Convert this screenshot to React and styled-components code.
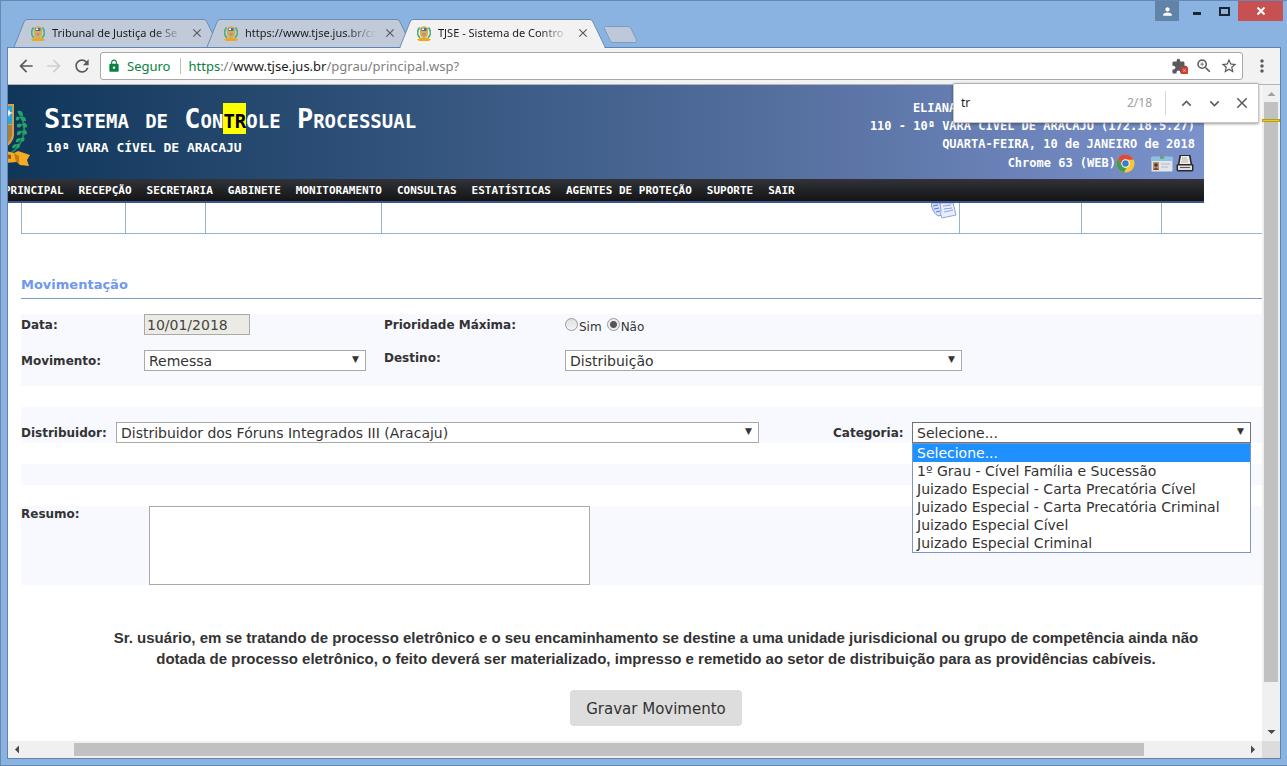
import React, { useState } from 'react';
import styled, { createGlobalStyle, css } from 'styled-components';
import {
  MdArrowBack,
  MdArrowForward,
  MdClose,
  MdExpandLess,
  MdExpandMore,
  MdExtension,
  MdLock,
  MdMoreVert,
  MdPerson,
  MdRefresh,
  MdStarBorder,
  MdZoomIn,
} from 'react-icons/md';

const uiFont = '"Noto Sans", "Open Sans", sans-serif';
const formFont = '"DejaVu Sans", Verdana, sans-serif';
const monoFont = '"DejaVu Sans Mono", "Liberation Mono", monospace';

const GlobalStyle = createGlobalStyle`
  *, *::before, *::after {
    box-sizing: border-box;
  }

  body {
    margin: 0;
    color: #333333;
    font-family: ${formFont};
  }

  button, input, select, textarea {
    font: inherit;
    color: inherit;
    margin: 0;
  }
`;

/* ---------- browser window ---------- */

const Window = styled.div`
  min-height: 100vh;
  display: flex;
  flex-direction: column;
  padding: 0 6px 6px;
  background: #8ab3e2;
  border: 1px solid #6688b4;
  border-right-width: 0;
`;

const TitleBar = styled.header`
  display: flex;
  justify-content: space-between;
  height: 46px;
`;

const Tabs = styled.div`
  display: flex;
  align-items: flex-end;
  padding-left: 7px;
`;

const TabShape = styled.svg`
  position: absolute;
  inset: 0;
  width: 100%;
  height: 100%;
  overflow: visible;
`;

const TabBox = styled.div`
  position: relative;
  z-index: ${({ $active }) => ($active ? 2 : 1)};
  display: flex;
  align-items: center;
  gap: 7px;
  width: 205px;
  height: 28px;
  padding: 0 15px 0 17px;
  margin-right: -12px;
`;

const TabIcon = styled.svg`
  position: relative;
  flex: none;
`;

const TabTitle = styled.span`
  position: relative;
  flex: 1;
  white-space: nowrap;
  font: 11px/20px ${uiFont};
  color: #1c1c1c;
  mask-image: linear-gradient(to right, #000 78%, transparent);
`;

const IconButton = styled.button`
  position: relative;
  display: flex;
  align-items: center;
  justify-content: center;
  flex: none;
  width: ${({ $size }) => $size || 20}px;
  height: ${({ $size }) => $size || 20}px;
  padding: 0;
  border: 0;
  background: none;
  color: ${({ $color }) => $color || '#5a5a5a'};
`;

const NewTab = styled.button`
  align-self: flex-end;
  width: 36px;
  height: 18px;
  margin: 0 0 3px 10px;
  padding: 0;
  border: 0;
  background: none;

  svg {
    display: block;
  }
`;

const WindowButtons = styled.div`
  display: flex;
  align-items: flex-start;
  margin-right: -2px;
`;

const WindowButton = styled.button`
  display: flex;
  align-items: center;
  justify-content: center;
  width: ${({ $width }) => $width}px;
  height: 20px;
  padding: 0;
  border: 0;
  background: ${({ $bg }) => $bg || 'none'};
  color: #ffffff;
`;

const UserButton = styled(WindowButton)`
  margin-right: 4px;
`;

const Frame = styled.div`
  position: relative;
  flex: 1;
  display: flex;
  flex-direction: column;
  border: 1px solid #5d84b4;
  background: #ffffff;
`;

const Toolbar = styled.div`
  display: flex;
  align-items: center;
  height: 37px;
  padding: 0 8px;
  background: #f2f2f2;
  border-bottom: 1px solid #b4b4b4;
`;

const NavButtons = styled.div`
  display: flex;
  gap: 8px;
  margin-right: 8px;
`;

const AddressBar = styled.div`
  flex: 1;
  display: flex;
  align-items: center;
  height: 28px;
  margin-right: 9px;
  padding: 0 3px 0 6px;
  border: 1px solid #a8a8a8;
  border-radius: 3px;
  background: #ffffff;
  font: 13px/20px ${uiFont};
`;

const Secure = styled.span`
  display: flex;
  align-items: center;
  gap: 6px;
  height: 16px;
  padding-right: 10px;
  margin-right: 7px;
  border-right: 1px solid #c0c0c0;
  color: #0b8043;
`;

const Url = styled.div`
  flex: 1;
  color: #808080;
  outline: none;

  em {
    font-style: normal;
    color: #0b8043;
  }

  strong {
    font-weight: normal;
    color: #1c1c1c;
  }
`;

const AddressIcons = styled.div`
  display: flex;
  gap: 5px;
`;

const BlockedBadge = styled.span`
  position: absolute;
  right: 1px;
  bottom: 2px;
  display: flex;
  padding: 1px;
  border-radius: 1px;
  background: #d23f31;
  color: #ffffff;
`;

const FindBar = styled.form`
  position: absolute;
  z-index: 5;
  top: 35px;
  right: 21px;
  display: flex;
  align-items: center;
  width: 306px;
  height: 40px;
  padding: 0 6px 0 7px;
  border: 1px solid #c6c6c6;
  border-top-color: #b0b0b0;
  border-radius: 2px;
  background: #ffffff;
  box-shadow: 0 1px 3px rgba(0, 0, 0, 0.4);
  font: 12px/20px ${uiFont};
`;

const FindInput = styled.input`
  flex: 1;
  min-width: 0;
  padding: 0;
  border: 0;
  outline: none;
  color: #1c1c1c;
`;

const FindCount = styled.span`
  height: 24px;
  line-height: 24px;
  padding-right: 13px;
  margin-right: 10px;
  border-right: 1px solid #d5d5d5;
  color: #a0a0a0;
`;

const FindButtons = styled.div`
  display: flex;
  gap: 8px;
`;

/* ---------- scroll bars ---------- */

const Viewport = styled.div`
  flex: 1;
  display: grid;
  grid-template-columns: minmax(0, 1fr) 18px;
  grid-template-rows: minmax(0, 1fr) 17px;
`;

const Track = styled.div`
  display: flex;
  align-items: center;
  flex-direction: ${({ $vertical }) => ($vertical ? 'column' : 'row')};
  background: #f0f0f0;
`;

const Thumb = styled.div`
  flex: ${({ $share }) => $share} 0 0;
  ${({ $vertical }) => ($vertical ? css`width: 14px;` : css`height: 13px;`)}
  background: #c1c1c1;
`;

const Rest = styled.div`
  flex: ${({ $share }) => $share} 0 0;
`;

const FindMark = styled.div`
  width: 18px;
  height: 3px;
  margin-top: 17px;
  margin-left: -2px;
  border: 1px solid #b89c1c;
  background: #f0d000;
`;

const Arrow = styled.svg`
  flex: none;
  width: 17px;
  height: 17px;
  fill: ${({ $dim }) => ($dim ? '#a0a0a0' : '#4a4a4a')};
`;

const Corner = styled.div`
  background: #dcdcdc;
`;

/* ---------- page ---------- */

const Page = styled.div`
  overflow: hidden;
`;

const Banner = styled.header`
  margin-right: 58px;
`;

const BannerTop = styled.div`
  display: flex;
  justify-content: space-between;
  height: 94px;
  padding-right: 9px;
  background: linear-gradient(to right, #10365a, #34557e 35%, #5b74a5 70%, #7b92cc);
  color: #ffffff;
  font-family: ${monoFont};
  font-weight: bold;
`;

const Brand = styled.div`
  display: flex;
  gap: 13px;
  padding-top: 19px;
`;

const Title = styled.h1`
  margin: 0;
  font-size: 27px;
  line-height: 30px;
  font-variant: small-caps;
  white-space: nowrap;

  mark {
    background: #ffff00;
    color: #000000;
  }
`;

const Court = styled.p`
  margin: 4px 0 0 2px;
  font-size: 13px;
  line-height: 20px;
`;

const Session = styled.div`
  padding-top: 14px;
  font-size: 12px;
  line-height: 18px;
  text-align: right;
  white-space: nowrap;
`;

const UserName = styled.div`
  padding-left: 43px;
  text-align: left;
`;

const Client = styled.div`
  display: flex;
  align-items: center;
  justify-content: flex-end;
  height: 20px;
`;

const ClientIcons = styled.span`
  display: flex;
  align-items: center;
  gap: 3px;
  margin: 0 1px 0 16px;
`;

const Menu = styled.nav`
  display: flex;
  gap: 15px;
  height: 24px;
  margin-left: -4px;
  background: linear-gradient(#313339, #141414);
  border-bottom: 2px solid #3c568f;
`;

const MenuLink = styled.a`
  color: #ffffff;
  font: bold 11px/24px ${monoFont};
  text-decoration: none;
  white-space: nowrap;
`;

// the sheet is wider than the viewport, its right edge is scrolled out
const Sheet = styled.main`
  width: calc(100% + 29px);
  padding: 0 0 15px 13px;
`;

const HistoryTable = styled.table`
  width: 100%;
  table-layout: fixed;
  border-collapse: collapse;

  td {
    height: 30px;
    padding: 0 2px 13px;
    border: 1px solid #93b3cf;
    border-top: 0;
    text-align: right;
    vertical-align: top;
  }

  svg {
    display: block;
    margin-left: auto;
  }
`;

const SectionTitle = styled.h2`
  margin: 41px 0 15px;
  padding-bottom: 3px;
  border-bottom: 1px solid #7c9cc2;
  color: #6f98ec;
  font: bold 13px/20px ${formFont};
`;

const Band = styled.div`
  margin-bottom: 21px;
  background: #f8f9ff;
`;

const EmptyBand = styled(Band)`
  height: 21px;
`;

const MainFields = styled(Band)`
  display: grid;
  grid-template-columns: 123px 240px 181px minmax(0, 1fr);
  grid-auto-rows: 21px;
  row-gap: 15px;
  padding-bottom: 15px;
`;

const DistributionFields = styled(Band)`
  display: grid;
  grid-template-columns: 95px minmax(0, 643fr) 74px 79px minmax(0, 339fr);
  grid-auto-rows: 21px;
  padding: 15px 40px 0 0;
`;

const SummaryFields = styled(Band)`
  display: grid;
  grid-template-columns: 128px minmax(0, 1fr);
`;

const Label = styled.label`
  grid-column-start: ${({ $column }) => $column || 'auto'};
  font: bold 12px/22px ${formFont};
  line-height: ${({ $compact }) => ($compact ? 16 : 22)}px;
  color: #333333;
`;

const DateInput = styled.input`
  width: 106px;
  height: 21px;
  padding: 1px 2px 0;
  border: 1px solid #a9a9a9;
  background: #ebebe4;
  color: #444444;
  font-size: 14px;
`;

const RadioGroup = styled.div`
  display: flex;
  align-items: center;
  gap: 5px;
  font-size: 12px;
`;

const RadioLabel = styled.label`
  display: flex;
  align-items: flex-end;
  gap: 1px;
  line-height: 14px;
  padding-top: 6px;
`;

const Radio = styled.input.attrs({ type: 'radio' })`
  appearance: none;
  align-self: flex-start;
  width: 13px;
  height: 13px;
  margin-top: -2px;
  border: 1px solid #9a9a9a;
  border-radius: 50%;
  background: linear-gradient(#e0e0e0, #f4f4f4);

  &:checked {
    background: radial-gradient(circle, #555555 0 3px, #ececec 4px);
  }
`;

const SelectBox = styled.div`
  position: relative;
  width: ${({ $width }) => $width || '100%'};
  max-width: 100%;
  height: 21px;

  &::after {
    content: '▼';
    position: absolute;
    top: 0;
    right: 7px;
    font: 9px/18px ${formFont};
    pointer-events: none;
  }
`;

const Select = styled.select`
  appearance: none;
  display: block;
  width: 100%;
  height: 21px;
  padding: 1px 20px 0 4px;
  border: 1px solid ${({ $open }) => ($open ? '#6e7480' : '#a9a9a9')};
  border-radius: 0;
  background: #ffffff;
  font-size: 14px;
  line-height: 19px;
`;

const OptionList = styled.ul`
  position: absolute;
  z-index: 3;
  top: 21px;
  left: 0;
  right: 0;
  margin: 0;
  padding: 0;
  list-style: none;
  border: 1px solid #7b96c6;
  background: #ffffff;
`;

const Option = styled.li`
  padding: 0 4px;
  font-size: 14px;
  line-height: 18px;
  white-space: nowrap;
  background: ${({ $selected }) => ($selected ? '#1e90ff' : 'transparent')};
  color: ${({ $selected }) => ($selected ? '#ffffff' : '#333333')};
`;

const Summary = styled.textarea`
  display: block;
  width: 441px;
  max-width: 100%;
  height: 79px;
  border: 1px solid #a9a9a9;
  background: #ffffff;
  resize: none;
`;

const Notice = styled.p`
  margin: 42px 72px 0;
  text-align: center;
  font: bold 15px/21px "Liberation Sans", Arial, sans-serif;
`;

const SaveButton = styled.button`
  display: block;
  margin: 21px auto 0;
  padding: 9px 16px 7px;
  border: 0;
  border-radius: 4px;
  background: #dddddd;
  font-size: 15px;
  line-height: 20px;
`;

const Favicon = () => (
  <TabIcon width="14" height="16" viewBox="0 0 14 16" aria-hidden="true">
    <path d="M2.5 2.5C0 6 0 10 3 13M11.5 2.5C14 6 14 10 11 13" fill="none" stroke="#4fae7c" strokeWidth="1.6" />
    <path d="M3 3q4-3.500 8 0v6q0 3-4 4.500Q3 12 3 9z" fill="#d8ae4c" />
    <path d="M4.500 3h5v3h-5z" fill="#4b6ea8" />
    <path d="M5 3.500h2v1.500H5z" fill="#fff" />
    <path d="M5 8h4l-1 3H6z" fill="#b98fa0" />
    <path d="M0 14.500l3-1.500h8l3 1.500-2 1.500H2z" fill="#eba81f" />
  </TabIcon>
);

const Crest = () => (
  <svg width="23" height="64" viewBox="0 0 23 64" aria-hidden="true">
    <path d="M-8 0H6V32Q4 42-8 46z" fill="#d2a14a" />
    <path d="M-8 2H4V20H-8z" fill="#27a5d8" />
    <path d="M-8 21H4V31Q2 40-8 43z" fill="#b07b35" />
    <path d="M1 5l1 3 3 1-3 1-1 3-1-3-3-1 3-1z" fill="#fff" />
    <path d="M10 7Q19 20 15 33 11 44 3 49" fill="none" stroke="#1f8a5f" strokeWidth="2" />
    <g fill="#25a36c">
      <path d="M10 7q5-1 5 5-5 0-5-5zM12 13q6-2 6 4-5 1-6-4zM14 20q5-3 5 3-4 2-5-3zM14 27q5-3 5 3-5 2-5-3zM13 34q5-2 3 3-4 2-3-3zM9 40q5-1 2 4-4 1-2-4z" />
      <path d="M12 13q-5-2-4 3 3 2 4-3zM14 20q-6-2-5 3 4 2 5-3zM14 27q-6-1-5 4 4 1 5-4zM13 34q-6 0-5 4 4 1 5-4zM9 40q-5 0-5 4 4 1 5-4z" />
    </g>
    <path d="M-2 47l8 2 4-2 12 4-3 5 2 6-9-1-3-3-11 1z" fill="#f4ac22" />
    <path d="M6 49l5 3v7l-3-1z" fill="#c27a15" />
    <path d="M-2 50l5 1v4l-5-1z" fill="#8c5b16" />
  </svg>
);

const ChromeLogo = () => (
  <svg width="19" height="19" viewBox="0 0 20 20" aria-hidden="true">
    <circle cx="10" cy="10" r="9.500" fill="#f5c73a" />
    <path d="M1.800 5.200A9.500 9.500 0 0 1 18.500 6H10a4 4 0 0 0-3.600 5.500z" fill="#de4b3c" />
    <path d="M1.800 5.200l4.600 7A4 4 0 0 0 11 14l-2.500 5.400A9.500 9.500 0 0 1 1.800 5.200z" fill="#3f9d55" />
    <circle cx="10" cy="10" r="4.400" fill="#fff" />
    <circle cx="10" cy="10" r="3.400" fill="#3380c8" />
  </svg>
);

const IdCard = () => (
  <svg width="22" height="18" viewBox="0 0 22 18" aria-hidden="true">
    <rect x="0.500" y="3" width="21" height="14.500" rx="1" fill="#dfe5ea" stroke="#aabccc" />
    <rect x="0.500" y="3" width="21" height="4" fill="#8cc0e4" />
    <rect x="2" y="8" width="6" height="8" fill="#b9936f" />
    <circle cx="5" cy="11" r="1.800" fill="#4e3328" />
    <path d="M2 16q3-5 6 0z" fill="#963b35" />
    <path d="M10 10h9M10 13h7" stroke="#b3b9be" />
    <rect x="9" y="0" width="4" height="5" rx="1" fill="#6c9a90" />
  </svg>
);

const Printer = () => (
  <svg width="18" height="18" viewBox="0 0 18 18" aria-hidden="true">
    <path d="M3.500 1h11l1.500 8.500 1.500 1.500v5l-1 1.500h-15L0.500 16v-5L2 9.500z" fill="#2a2a2e" />
    <path d="M5 2h8l1.500 8h-11z" fill="#f3f0ea" />
    <path d="M6 4h5M6 6h6M5 8h7" stroke="#b5b0a6" />
    <path d="M2 11.500h14v4.500H2z" fill="#dedede" />
    <path d="M4 13.500h10" stroke="#555" />
  </svg>
);

const Papers = () => (
  <svg width="26" height="16" viewBox="0 0 26 16" aria-hidden="true">
    <path d="M0 0h9l3 12-5 1Q1 9 0 0z" fill="#d5defa" stroke="#8499d8" />
    <path d="M2 3l5-1M3 6l5-1M5 9l4-1" stroke="#5f7bd2" />
    <path d="M9 0h13l3 12-14 3Q9 12 10 7z" fill="#e9eefe" stroke="#8ea2dc" />
    <path d="M12 3l8-1M13 6l8-1M13 9l9-2" stroke="#8aa0e0" />
  </svg>
);

const TAB_SHAPE = 'M0 28L10 3Q11 0.500 13 0.500H190Q192 0.500 193 3L205 28';

const Tab = ({ active, children }) => (
  <TabBox $active={active}>
    <TabShape viewBox="0 0 205 28" preserveAspectRatio="none" aria-hidden="true">
      <path d={TAB_SHAPE} fill={active ? '#f2f2f2' : '#c0cad9'} stroke="#6d8cb4" />
      {active && <path d="M0.500 28.500H204.500" stroke="#f2f2f2" />}
    </TabShape>
    <Favicon />
    <TabTitle>{children}</TabTitle>
    <IconButton $size={14} aria-label="Fechar guia"><MdClose size={14} /></IconButton>
  </TabBox>
);

const menuItems = [
  'PRINCIPAL',
  'RECEPÇÃO',
  'SECRETARIA',
  'GABINETE',
  'MONITORAMENTO',
  'CONSULTAS',
  'ESTATÍSTICAS',
  'AGENTES DE PROTEÇÃO',
  'SUPORTE',
  'SAIR',
];

const categories = [
  'Selecione...',
  '1º Grau - Cível Família e Sucessão',
  'Juizado Especial - Carta Precatória Cível',
  'Juizado Especial - Carta Precatória Criminal',
  'Juizado Especial Cível',
  'Juizado Especial Criminal',
];

const BrowserTop = () => (
  <TitleBar>
    <Tabs>
      <Tab>Tribunal de Justiça de Se</Tab>
      <Tab>https://www.tjse.jus.br/cc</Tab>
      <Tab active>TJSE - Sistema de Contro</Tab>
      <NewTab aria-label="Nova guia">
        <svg width="36" height="18" viewBox="0 0 36 18">
          <path d="M2.500 0.500H25Q27 0.500 28 2.500L33.500 14Q34 16.500 32 16.500H10Q8 16.500 7 14.500L1.500 2.500Q1 0.500 2.500 0.500z" fill="#bdc8d8" stroke="#7f9bbf" />
        </svg>
      </NewTab>
    </Tabs>
    <WindowButtons>
      <UserButton $width={24} $bg="#6283a8" aria-label="Usuário"><MdPerson size={13} /></UserButton>
      <WindowButton $width={28} aria-label="Minimizar">
        <svg width="10" height="10"><path d="M1 7.500h8" stroke="#1c2630" strokeWidth="3" /></svg>
      </WindowButton>
      <WindowButton $width={27} aria-label="Maximizar">
        <svg width="11" height="9"><rect x="1" y="1" width="9" height="7" fill="none" stroke="#1c2630" strokeWidth="2" /></svg>
      </WindowButton>
      <WindowButton $width={45} $bg="#c75050" aria-label="Fechar">
        <svg width="8" height="8"><path d="M0.500 0.500l7 7M7.500 0.500l-7 7" stroke="#fff" strokeWidth="2" /></svg>
      </WindowButton>
    </WindowButtons>
  </TitleBar>
);

const BrowserToolbar = () => (
  <Toolbar>
    <NavButtons>
      <IconButton aria-label="Voltar"><MdArrowBack size={20} /></IconButton>
      <IconButton $color="#cfcfcf" aria-label="Avançar"><MdArrowForward size={20} /></IconButton>
      <IconButton aria-label="Recarregar"><MdRefresh size={20} /></IconButton>
    </NavButtons>
    <AddressBar>
      <Secure><MdLock size={14} />Seguro</Secure>
      <Url role="textbox" aria-label="Endereço" contentEditable suppressContentEditableWarning spellCheck={false}>
        <em>https</em>://<strong>www.tjse.jus.br</strong>/pgrau/principal.wsp?
      </Url>
      <AddressIcons>
        <IconButton aria-label="Plug-in bloqueado">
          <MdExtension size={17} />
          <BlockedBadge><MdClose size={5} /></BlockedBadge>
        </IconButton>
        <IconButton aria-label="Zoom"><MdZoomIn size={18} /></IconButton>
        <IconButton aria-label="Favoritar"><MdStarBorder size={18} /></IconButton>
      </AddressIcons>
    </AddressBar>
    <IconButton aria-label="Menu"><MdMoreVert size={20} /></IconButton>
  </Toolbar>
);

const FindInPage = () => {
  const [term, setTerm] = useState('tr');

  return (
    <FindBar onSubmit={(e) => e.preventDefault()}>
      <FindInput aria-label="Localizar" value={term} onChange={(e) => setTerm(e.target.value)} />
      <FindCount>2/18</FindCount>
      <FindButtons>
        <IconButton type="button" aria-label="Anterior"><MdExpandLess size={19} /></IconButton>
        <IconButton type="button" aria-label="Próximo"><MdExpandMore size={19} /></IconButton>
        <IconButton type="button" aria-label="Fechar busca"><MdClose size={18} /></IconButton>
      </FindButtons>
    </FindBar>
  );
};

const PageBanner = () => (
  <Banner>
    <BannerTop>
      <Brand>
        <Crest />
        <div>
          <Title>Sistema de Con<mark>tr</mark>ole Processual</Title>
          <Court>10ª VARA CÍVEL DE ARACAJU</Court>
        </div>
      </Brand>
      <Session>
        <UserName>ELIANA</UserName>
        <div>110 - 10ª VARA CÍVEL DE ARACAJU (172.18.5.27)</div>
        <div>QUARTA-FEIRA, 10 de JANEIRO de 2018</div>
        <Client>
          Chrome 63 (WEB)
          <ChromeLogo />
          <ClientIcons>
            <IdCard />
            <Printer />
          </ClientIcons>
        </Client>
      </Session>
    </BannerTop>
    <Menu>
      {menuItems.map((item) => (
        <MenuLink href="#" key={item}>{item}</MenuLink>
      ))}
    </Menu>
  </Banner>
);

const MovementForm = () => {
  const [priority, setPriority] = useState('nao');
  const [category, setCategory] = useState(categories[0]);

  return (
    <form onSubmit={(e) => e.preventDefault()}>
      <SectionTitle>Movimentação</SectionTitle>

      <MainFields>
        <Label htmlFor="data">Data:</Label>
        <DateInput id="data" value="10/01/2018" readOnly />
        <Label as="span" id="prioridade">Prioridade Máxima:</Label>
        <RadioGroup role="radiogroup" aria-labelledby="prioridade">
          <RadioLabel>
            <Radio name="prioridade" checked={priority === 'sim'} onChange={() => setPriority('sim')} />
            Sim
          </RadioLabel>
          <RadioLabel>
            <Radio name="prioridade" checked={priority === 'nao'} onChange={() => setPriority('nao')} />
            Não
          </RadioLabel>
        </RadioGroup>

        <Label htmlFor="movimento">Movimento:</Label>
        <SelectBox $width="222px">
          <Select id="movimento"><option>Remessa</option></Select>
        </SelectBox>
        <Label htmlFor="destino" $compact>Destino:</Label>
        <SelectBox $width="397px">
          <Select id="destino"><option>Distribuição</option></Select>
        </SelectBox>
      </MainFields>

      <DistributionFields>
        <Label htmlFor="distribuidor">Distribuidor:</Label>
        <SelectBox>
          <Select id="distribuidor"><option>Distribuidor dos Fóruns Integrados III (Aracaju)</option></Select>
        </SelectBox>
        <Label htmlFor="categoria" $column={4}>Categoria:</Label>
        <SelectBox>
          <Select id="categoria" $open value={category} onChange={(e) => setCategory(e.target.value)}>
            {categories.map((name) => <option key={name}>{name}</option>)}
          </Select>
          <OptionList role="listbox" aria-label="Categoria">
            {categories.map((name) => (
              <Option
                key={name}
                role="option"
                aria-selected={name === category}
                $selected={name === category}
                onClick={() => setCategory(name)}
              >
                {name}
              </Option>
            ))}
          </OptionList>
        </SelectBox>
      </DistributionFields>

      <EmptyBand />

      <SummaryFields>
        <Label htmlFor="resumo" $compact>Resumo:</Label>
        <Summary id="resumo" />
      </SummaryFields>

      <Notice>
        Sr. usuário, em se tratando de processo eletrônico e o seu encaminhamento se destine a uma
        unidade jurisdicional ou grupo de competência ainda não dotada de processo eletrônico, o
        feito deverá ser materializado, impresso e remetido ao setor de distribuição para as
        providências cabíveis.
      </Notice>
      <SaveButton type="submit">Gravar Movimento</SaveButton>
    </form>
  );
};

const App = () => (
  <Window>
    <GlobalStyle />
    <BrowserTop />
    <Frame>
      <BrowserToolbar />
      <FindInPage />
      <Viewport>
        <Page>
          <PageBanner />
          <Sheet>
            <HistoryTable>
              <colgroup>
                <col width="104" />
                <col width="80" />
                <col width="176" />
                <col />
                <col width="122" />
                <col width="80" />
                <col width="129" />
              </colgroup>
              <tbody>
                <tr>
                  <td />
                  <td />
                  <td />
                  <td><Papers /></td>
                  <td />
                  <td />
                  <td />
                </tr>
              </tbody>
            </HistoryTable>
            <MovementForm />
          </Sheet>
        </Page>
        <Track $vertical>
          <Arrow viewBox="0 0 17 17" $dim><path d="M4.500 11h8l-4-4z" /></Arrow>
          <Thumb $vertical $share={580}><FindMark /></Thumb>
          <Rest $share={42} />
          <Arrow viewBox="0 0 17 17"><path d="M4.500 6h8l-4 4z" /></Arrow>
        </Track>
        <Track>
          <Arrow viewBox="0 0 17 17"><path d="M11 4.500v8l-4-4z" /></Arrow>
          <Rest $share={49} />
          <Thumb $share={1070} />
          <Rest $share={101} />
          <Arrow viewBox="0 0 17 17"><path d="M6 4.500v8l4-4z" /></Arrow>
        </Track>
        <Corner />
      </Viewport>
    </Frame>
  </Window>
);

export default App;
